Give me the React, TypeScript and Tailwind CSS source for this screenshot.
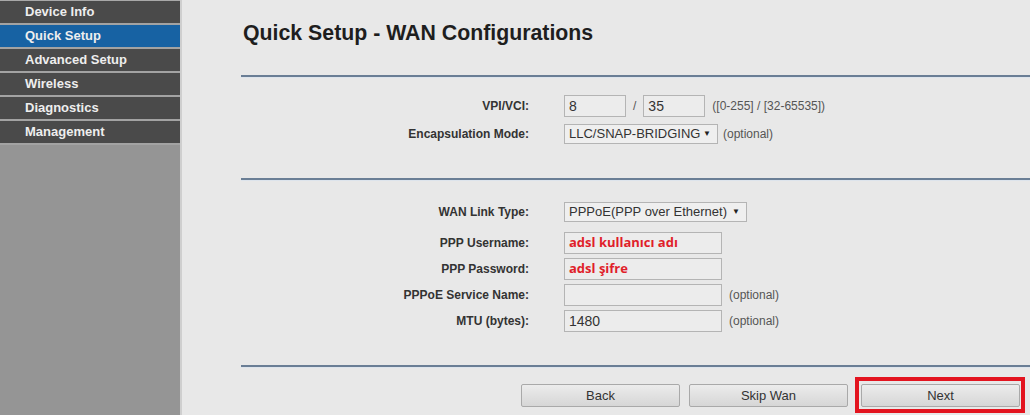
import React from "react";

const menu = ["Device Info", "Quick Setup", "Advanced Setup", "Wireless", "Diagnostics", "Management"];

function Row({ label, top, children }: { label: string; top: string; children: React.ReactNode }) {
  return (
    <div className={`ml-[59px] flex items-center ${top}`}>
      <div className="w-[288px] shrink-0 whitespace-nowrap text-right text-[12px] font-bold text-[#333]">{label}</div>
      <div className="ml-[35px] flex items-center whitespace-nowrap">{children}</div>
    </div>
  );
}

function Box({ w, children, red }: { w: string; children?: React.ReactNode; red?: boolean }) {
  return (
    <div
      className={`${w} flex h-[22px] shrink-0 items-center whitespace-nowrap border border-[#b4b4b4] bg-[#ececec] px-[4px] ${
        red
          ? "font-['Open_Sans',sans-serif] text-[13px] font-bold text-[#e01e2a]"
          : "text-[14px] text-[#333]"
      }`}
    >
      {children}
    </div>
  );
}

function Select({ w, text }: { w: string; text: string }) {
  return (
    <div
      className={`${w} flex h-[20px] shrink-0 items-center justify-between whitespace-nowrap border border-[#b4b4b4] bg-[#efefef] pl-[4px] pr-[6px] text-[13px] text-[#333]`}
    >
      <span>{text}</span>
      <span className="text-[8px] text-[#222]">▼</span>
    </div>
  );
}

function Line() {
  return <div className="ml-[59px] h-[3px] border-t-2 border-[#6a7e95] bg-[#dde4ec]" />;
}

function Btn({ children }: { children: React.ReactNode }) {
  return (
    <div className="flex h-[23px] w-[159px] items-center justify-center rounded-[2px] border border-[#a9a9a9] bg-gradient-to-b from-[#ececec] to-[#d6d6d6] text-[13px] text-[#333]">
      {children}
    </div>
  );
}

export default function App() {
  return (
    <div className="flex h-[415px] w-[1030px] overflow-hidden bg-[#e8e8e8] font-['Liberation_Sans',Arial,sans-serif]">
      <div className="flex w-[182px] shrink-0 flex-col border-r-2 border-[#cfcfcf] bg-[#959595]">
        <div className="flex flex-col gap-[2px] border-t border-[#a8a8a8] bg-[#a3a3a3] pb-[2px]">
          {menu.map((m) => (
            <div
              key={m}
              className={`flex h-[22px] items-center pl-[25px] text-[13px] font-bold text-[#eeeeee] ${
                m === "Quick Setup" ? "bg-[#1762a3]" : "bg-[#4a4a4a]"
              }`}
            >
              {m}
            </div>
          ))}
        </div>
      </div>

      <div className="flex-1">
        <h1 className="ml-[61px] mt-[21px] text-[21.3px] font-bold leading-[24px] text-[#1e1e1e]">
          Quick Setup - WAN Configurations
        </h1>
        <div className="mt-[30px]">
          <Line />
        </div>

        <Row label="VPI/VCI:" top="mt-[17px]">
          <Box w="w-[62px]">8</Box>
          <span className="mx-[7px] text-[12px] text-[#555]">/</span>
          <Box w="w-[62px]">35</Box>
          <span className="ml-[7px] text-[12px] text-[#555]">([0-255] / [32-65535])</span>
        </Row>
        <Row label="Encapsulation Mode:" top="mt-[7px]">
          <Select w="w-[154px]" text="LLC/SNAP-BRIDGING" />
          <span className="ml-[5px] text-[12px] text-[#555]">(optional)</span>
        </Row>

        <div className="mt-[34px]">
          <Line />
        </div>

        <Row label="WAN Link Type:" top="mt-[21px]">
          <Select w="w-[183px]" text="PPPoE(PPP over Ethernet)" />
        </Row>
        <Row label="PPP Username:" top="mt-[10px]">
          <Box w="w-[158px]" red>adsl kullanıcı adı</Box>
        </Row>
        <Row label="PPP Password:" top="mt-[4px]">
          <Box w="w-[158px]" red>adsl şifre</Box>
        </Row>
        <Row label="PPPoE Service Name:" top="mt-[4px]">
          <Box w="w-[158px]" />
          <span className="ml-[7px] text-[12px] text-[#555]">(optional)</span>
        </Row>
        <Row label="MTU (bytes):" top="mt-[4px]">
          <Box w="w-[158px]">1480</Box>
          <span className="ml-[7px] text-[12px] text-[#555]">(optional)</span>
        </Row>

        <div className="mt-[33px]">
          <Line />
        </div>

        <div className="ml-[339px] mt-[16px] flex items-center">
          <Btn>Back</Btn>
          <div className="ml-[9px]">
            <Btn>Skip Wan</Btn>
          </div>
          <div className="relative ml-[13px]">
            <Btn>Next</Btn>
            <div className="absolute -bottom-[6px] -left-[6px] -right-[5px] -top-[7px] border-4 border-[#e3141f]" />
          </div>
        </div>
      </div>
    </div>
  );
}
